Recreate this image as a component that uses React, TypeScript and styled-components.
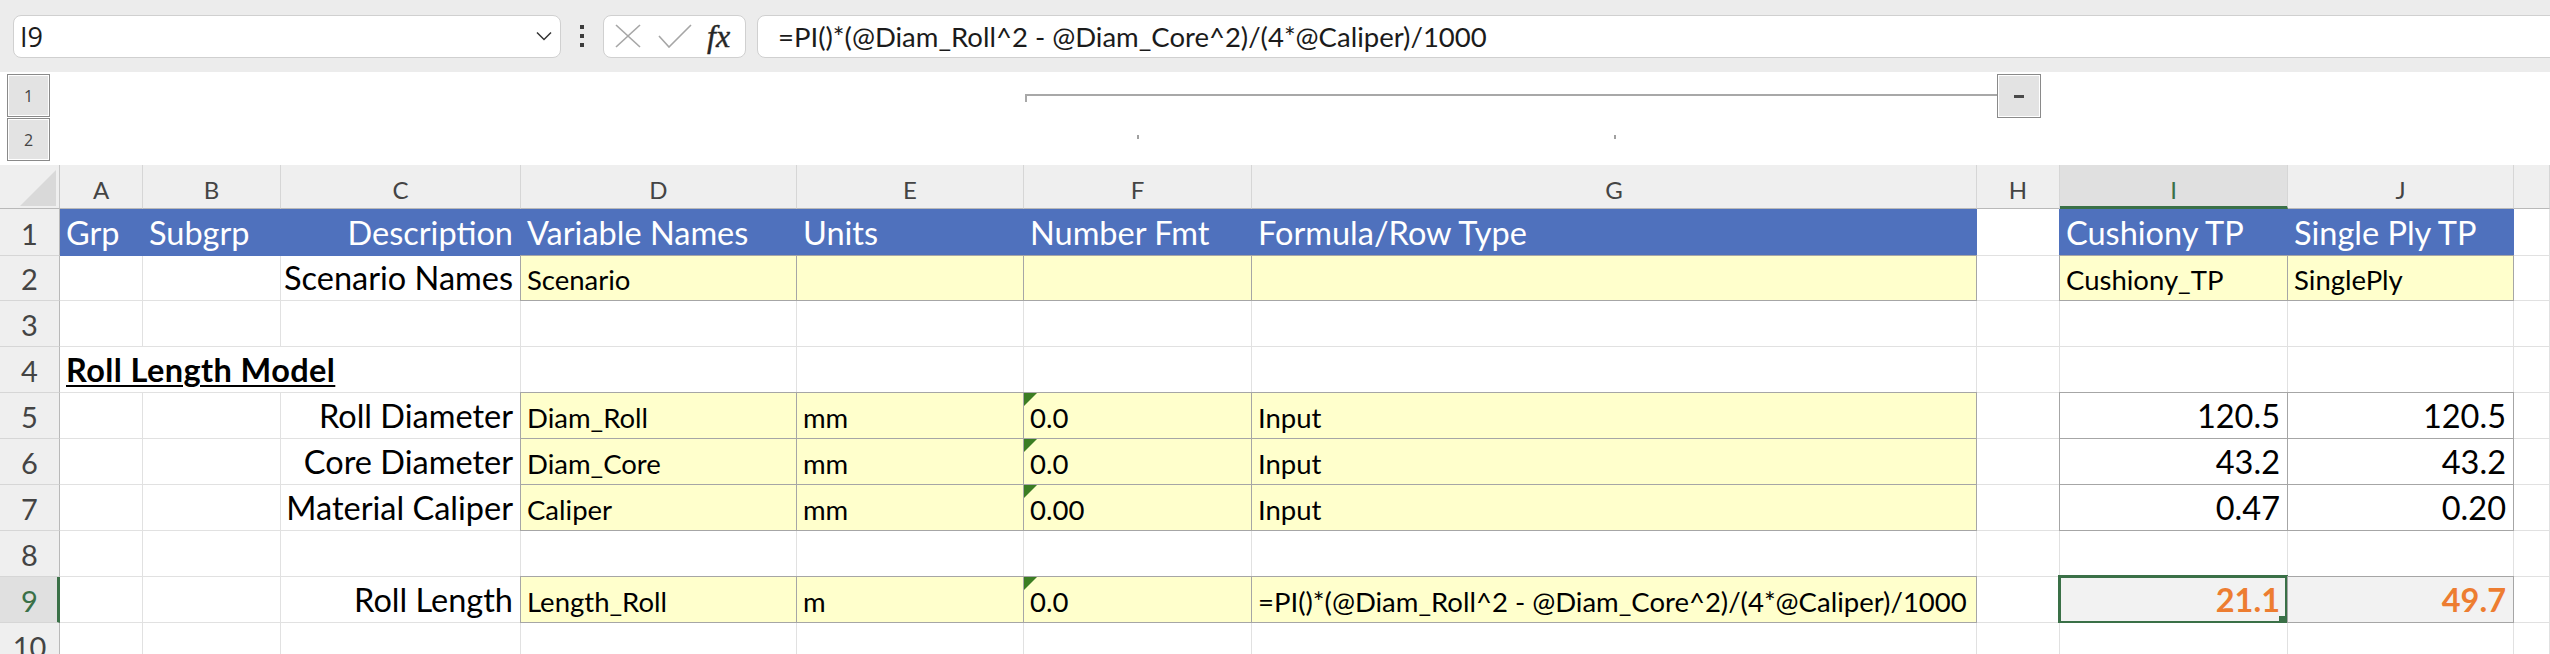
import React from "react";
import styled, { createGlobalStyle } from "styled-components";

const COLS = "60px 83px 138px 240px 276px 227px 228px 725px 83px 228px 226px 1fr";
const BLUE = "#4f71bd";
const YELLOW = "#ffffcc";
const GRID = "#e1e1e1";
const EDGE = "#a6a6a6";
const GREEN = "#3a7047";
const ORANGE = "#ed7d31";
const CELL_FONT = `Lato, "Liberation Sans", sans-serif`;
const UI_FONT = `"Open Sans", "Liberation Sans", sans-serif`;

const GlobalStyle = createGlobalStyle`
  html, body { margin: 0; padding: 0; background: #ffffff; overflow: hidden; }
  #root { width: 2550px; height: 654px; overflow: hidden; }
`;

const Page = styled.div`
  width: 2550px;
  height: 654px;
  overflow: hidden;
  display: flex;
  flex-direction: column;
  background: #fff;
`;

/* ---------- formula bar ---------- */
const FormulaBar = styled.div`
  flex: none;
  height: 72px;
  box-sizing: border-box;
  background: #ececec;
  display: flex;
  align-items: center;
  padding-left: 13px;
  overflow: hidden;
`;

const NameBox = styled.div`
  flex: none;
  width: 548px;
  height: 43px;
  box-sizing: border-box;
  background: #fff;
  border: 1px solid #d0d0d0;
  border-radius: 8px;
  display: flex;
  align-items: center;
  justify-content: space-between;
  padding: 0 8px 0 6px;
  font-family: ${UI_FONT};
  font-size: 27px;
  color: #1b1b1b;
`;

const DotsHandle = styled.div`
  flex: none;
  width: 42px;
  display: flex;
  flex-direction: column;
  align-items: center;
  gap: 5px;
`;

const Dot = styled.span`
  width: 4px;
  height: 4px;
  background: #3c3c3c;
`;

const FxBox = styled.div`
  flex: none;
  width: 143px;
  height: 43px;
  box-sizing: border-box;
  background: #fff;
  border: 1px solid #d0d0d0;
  border-radius: 8px;
  display: flex;
  align-items: center;
  padding-left: 11px;
  gap: 17px;
`;

const FxLabel = styled.span`
  font-family: "Liberation Serif", "DejaVu Serif", serif;
  font-style: italic;
  font-size: 32px;
  color: #262626;
  margin-left: -2px;
  -webkit-text-stroke: 0.4px #262626;
`;

const FormulaInput = styled.div`
  flex: 1;
  margin-left: 11px;
  margin-right: -20px;
  height: 43px;
  box-sizing: border-box;
  background: #fff;
  border: 1px solid #d0d0d0;
  border-radius: 8px;
  display: flex;
  align-items: center;
  padding-left: 20px;
  font-family: ${CELL_FONT};
  font-size: 27.5px;
  color: #1b1b1b;
  white-space: nowrap;
`;

/* ---------- outline pane ---------- */
const OutlinePane = styled.div`
  flex: none;
  height: 93px;
  box-sizing: border-box;
  padding: 2px 0 3px;
  display: grid;
  grid-template-columns: ${COLS};
  grid-template-rows: 44px 44px;
  background: #fff;
`;

const LevelButton = styled.div<{ $row: number }>`
  grid-column: 1;
  grid-row: ${(p) => p.$row};
  width: 43px;
  height: 43px;
  margin-left: 7px;
  box-sizing: border-box;
  border: 1px solid #8a8a8a;
  box-shadow: inset 0 0 0 1px #fff;
  background: #e3e3e3;
  display: flex;
  align-items: center;
  justify-content: center;
  font-family: ${UI_FONT};
  font-size: 16px;
  color: #444;
`;

const GroupBar = styled.div`
  grid-column: 7 / 10;
  grid-row: 1;
  display: flex;
  align-items: flex-start;
  padding-right: 19px;
`;

const GroupLine = styled.div`
  flex: 1;
  height: 6px;
  margin-top: 20px;
  margin-left: 1px;
  border-top: 2px solid #a8a8a8;
  border-left: 2px solid #a8a8a8;
`;

const CollapseButton = styled.div`
  flex: none;
  width: 44px;
  height: 44px;
  box-sizing: border-box;
  border: 1px solid #8a8a8a;
  box-shadow: inset 0 0 0 1px #fff;
  background: #e3e3e3;
  display: flex;
  align-items: center;
  justify-content: center;
`;

const MinusBar = styled.span`
  width: 10px;
  height: 3px;
  background: #4a4a4a;
`;

const GroupDot = styled.span<{ $col: number }>`
  grid-column: ${(p) => p.$col};
  grid-row: 2;
  justify-self: center;
  align-self: center;
  width: 2px;
  height: 4px;
  margin-top: -6px;
  background: #a0a0a0;
`;

/* ---------- sheet ---------- */
const Sheet = styled.div`
  flex: none;
  display: flex;
  flex-direction: column;
`;

const Row = styled.div<{ $h: number }>`
  display: grid;
  grid-template-columns: ${COLS};
  height: ${(p) => p.$h}px;
`;

const Corner = styled.div`
  box-sizing: border-box;
  background: #efefef;
  border-right: 1px solid #c8c8c8;
  border-bottom: 1px solid #b9b9b9;
  display: flex;
  align-items: flex-end;
  justify-content: flex-end;
  padding: 0 3px 2px 0;
`;

const CornerTriangle = styled.div`
  width: 36px;
  height: 36px;
  background: #d9d9d9;
  clip-path: polygon(100% 0, 100% 100%, 0 100%);
`;

const ColHead = styled.div<{ $sel?: boolean }>`
  box-sizing: border-box;
  background: ${(p) => (p.$sel ? "#e0e0e0" : "#efefef")};
  border-right: 1px solid #d6d6d6;
  border-bottom: ${(p) => (p.$sel ? `3px solid ${GREEN}` : "1px solid #b9b9b9")};
  display: flex;
  align-items: flex-end;
  justify-content: center;
  padding-bottom: ${(p) => (p.$sel ? 1 : 3)}px;
  font-family: ${CELL_FONT};
  font-size: 24px;
  line-height: 1.2;
  color: ${(p) => (p.$sel ? GREEN : "#444")};
`;

const RowHead = styled.div<{ $sel?: boolean }>`
  box-sizing: border-box;
  background: ${(p) => (p.$sel ? "#e0e0e0" : "#efefef")};
  border-right: ${(p) => (p.$sel ? `3px solid ${GREEN}` : "1px solid #b9b9b9")};
  border-bottom: 1px solid #d6d6d6;
  display: flex;
  align-items: flex-end;
  justify-content: center;
  padding: 0 ${(p) => (p.$sel ? 0 : 2)}px 3px 2px;
  font-family: ${CELL_FONT};
  font-size: 29px;
  line-height: 1.2;
  color: ${(p) => (p.$sel ? GREEN : "#444")};
  overflow: hidden;
`;

const Cell = styled.div<{
  $fill?: string;
  $align?: "left" | "right";
  $small?: boolean;
  $bold?: boolean;
  $color?: string;
  $br?: string;
  $bb?: string;
  $edge?: string;
  $span?: number;
}>`
  position: relative;
  box-sizing: border-box;
  min-width: 0;
  grid-column: ${(p) => (p.$span ? `span ${p.$span}` : "auto")};
  background: ${(p) => p.$fill ?? "#fff"};
  border-right: 1px solid ${(p) => p.$br ?? GRID};
  border-bottom: 1px solid ${(p) => p.$bb ?? GRID};
  box-shadow: ${(p) =>
    p.$edge ? `-1px 0 0 ${p.$edge}, 0 -1px 0 ${p.$edge}, -1px -1px 0 ${p.$edge}` : "none"};
  display: flex;
  align-items: flex-end;
  justify-content: ${(p) => (p.$align === "right" ? "flex-end" : "flex-start")};
  padding: 0 7px ${(p) => (p.$small ? 4 : 3)}px 6px;
  font-family: ${CELL_FONT};
  font-size: ${(p) => (p.$small ? 27.5 : 32.5)}px;
  line-height: 1.2;
  font-weight: ${(p) => (p.$bold ? 700 : 400)};
  color: ${(p) => p.$color ?? "#000"};
  white-space: nowrap;
`;

const SectionTitle = styled.span`
  font-weight: 700;
  letter-spacing: 0.4px;
  text-decoration: underline;
  text-decoration-thickness: 2px;
  text-underline-offset: 3px;
`;

const ErrorFlag = styled.span`
  position: absolute;
  top: 0;
  left: 0;
  width: 13px;
  height: 13px;
  background: #3b7d23;
  clip-path: polygon(0 0, 100% 0, 0 100%);
`;

const SelectionFrame = styled.span`
  position: absolute;
  top: -2px;
  left: -2px;
  right: -1px;
  bottom: -2px;
  border: 3px solid ${GREEN};
  pointer-events: none;
`;

const FillHandle = styled.span`
  position: absolute;
  right: -3px;
  bottom: -4px;
  width: 9px;
  height: 9px;
  background: ${GREEN};
`;

/* ---------- data ---------- */
type Spec = {
  t?: string;
  fill?: string;
  align?: "left" | "right";
  small?: boolean;
  bold?: boolean;
  color?: string;
  br?: string;
  bb?: string;
  edge?: string;
  span?: number;
  flag?: boolean;
  selected?: boolean;
  title?: boolean;
};

const E: Spec = {};
const blue = (t: string, align?: "left" | "right"): Spec => ({
  t,
  fill: BLUE,
  color: "#fff",
  br: BLUE,
  bb: BLUE,
  align,
});
const inp = (t = "", extra: Partial<Spec> = {}): Spec => ({
  t,
  fill: YELLOW,
  small: true,
  br: EDGE,
  bb: EDGE,
  edge: EDGE,
  ...extra,
});
const val = (t: string, extra: Partial<Spec> = {}): Spec => ({
  t,
  align: "right",
  br: EDGE,
  bb: EDGE,
  edge: EDGE,
  ...extra,
});
const label = (t: string): Spec => ({ t, align: "right" });
const empty = (n: number): Spec[] => Array.from({ length: n }, () => E);

const rows: { n: number; h: number; sel?: boolean; cells: Spec[] }[] = [
  {
    n: 1,
    h: 47,
    cells: [
      blue("Grp"),
      blue("Subgrp"),
      blue("Description", "right"),
      blue("Variable Names"),
      blue("Units"),
      blue("Number Fmt"),
      blue("Formula/Row Type"),
      { br: BLUE },
      blue("Cushiony TP"),
      blue("Single Ply TP"),
      E,
    ],
  },
  {
    n: 2,
    h: 45,
    cells: [
      E,
      E,
      label("Scenario Names"),
      inp("Scenario"),
      inp(),
      inp(),
      inp(),
      E,
      inp("Cushiony_TP"),
      inp("SinglePly"),
      E,
    ],
  },
  { n: 3, h: 46, cells: empty(11) },
  {
    n: 4,
    h: 46,
    cells: [{ t: "Roll Length Model", title: true, span: 3 }, ...empty(8)],
  },
  {
    n: 5,
    h: 46,
    cells: [
      E,
      E,
      label("Roll Diameter"),
      inp("Diam_Roll"),
      inp("mm"),
      inp("0.0", { flag: true }),
      inp("Input"),
      E,
      val("120.5"),
      val("120.5"),
      E,
    ],
  },
  {
    n: 6,
    h: 46,
    cells: [
      E,
      E,
      label("Core Diameter"),
      inp("Diam_Core"),
      inp("mm"),
      inp("0.0", { flag: true }),
      inp("Input"),
      E,
      val("43.2"),
      val("43.2"),
      E,
    ],
  },
  {
    n: 7,
    h: 46,
    cells: [
      E,
      E,
      label("Material Caliper"),
      inp("Caliper"),
      inp("mm"),
      inp("0.00", { flag: true }),
      inp("Input"),
      E,
      val("0.47"),
      val("0.20"),
      E,
    ],
  },
  { n: 8, h: 46, cells: empty(11) },
  {
    n: 9,
    h: 46,
    sel: true,
    cells: [
      E,
      E,
      label("Roll Length"),
      inp("Length_Roll"),
      inp("m"),
      inp("0.0", { flag: true }),
      inp("=PI()*(@Diam_Roll^2 - @Diam_Core^2)/(4*@Caliper)/1000"),
      E,
      val("21.1", { bold: true, color: ORANGE, fill: "#f2f2f2", selected: true }),
      val("49.7", { bold: true, color: ORANGE, fill: "#f2f2f2" }),
      E,
    ],
  },
  { n: 10, h: 46, cells: empty(11) },
];

const COL_LETTERS = ["A", "B", "C", "D", "E", "F", "G", "H", "I", "J", ""];

export default function App() {
  return (
    <Page>
      <GlobalStyle />
      <FormulaBar>
        <NameBox>
          <span>I9</span>
          <svg width="16" height="10" viewBox="0 0 16 10">
            <polyline points="1,1.5 8,8.5 15,1.5" fill="none" stroke="#333" strokeWidth="1.5" />
          </svg>
        </NameBox>
        <DotsHandle>
          <Dot />
          <Dot />
          <Dot />
        </DotsHandle>
        <FxBox>
          <svg width="26" height="24" viewBox="0 0 26 24">
            <line x1="1" y1="1" x2="25" y2="23" stroke="#a6a6a6" strokeWidth="1.6" />
            <line x1="25" y1="1" x2="1" y2="23" stroke="#a6a6a6" strokeWidth="1.6" />
          </svg>
          <svg width="34" height="24" viewBox="0 0 34 24">
            <polyline points="1,12 11,23 33,1" fill="none" stroke="#a6a6a6" strokeWidth="1.6" />
          </svg>
          <FxLabel>fx</FxLabel>
        </FxBox>
        <FormulaInput>=PI()*(@Diam_Roll^2 - @Diam_Core^2)/(4*@Caliper)/1000</FormulaInput>
      </FormulaBar>

      <OutlinePane>
        <LevelButton $row={1}>1</LevelButton>
        <LevelButton $row={2}>2</LevelButton>
        <GroupBar>
          <GroupLine />
          <CollapseButton>
            <MinusBar />
          </CollapseButton>
        </GroupBar>
        <GroupDot $col={7} />
        <GroupDot $col={8} />
      </OutlinePane>

      <Sheet>
        <Row $h={44}>
          <Corner>
            <CornerTriangle />
          </Corner>
          {COL_LETTERS.map((l, i) => (
            <ColHead key={i} $sel={l === "I"}>
              {l}
            </ColHead>
          ))}
        </Row>
        {rows.map((r) => (
          <Row key={r.n} $h={r.h}>
            <RowHead $sel={r.sel}>{r.n}</RowHead>
            {r.cells.map((c, i) => (
              <Cell
                key={i}
                $fill={c.fill}
                $align={c.align}
                $small={c.small}
                $bold={c.bold}
                $color={c.color}
                $br={c.br}
                $bb={c.bb}
                $edge={c.edge}
                $span={c.span}
              >
                {c.flag && <ErrorFlag />}
                {c.title ? <SectionTitle>{c.t}</SectionTitle> : c.t}
                {c.selected && (
                  <SelectionFrame>
                    <FillHandle />
                  </SelectionFrame>
                )}
              </Cell>
            ))}
          </Row>
        ))}
      </Sheet>
    </Page>
  );
}
